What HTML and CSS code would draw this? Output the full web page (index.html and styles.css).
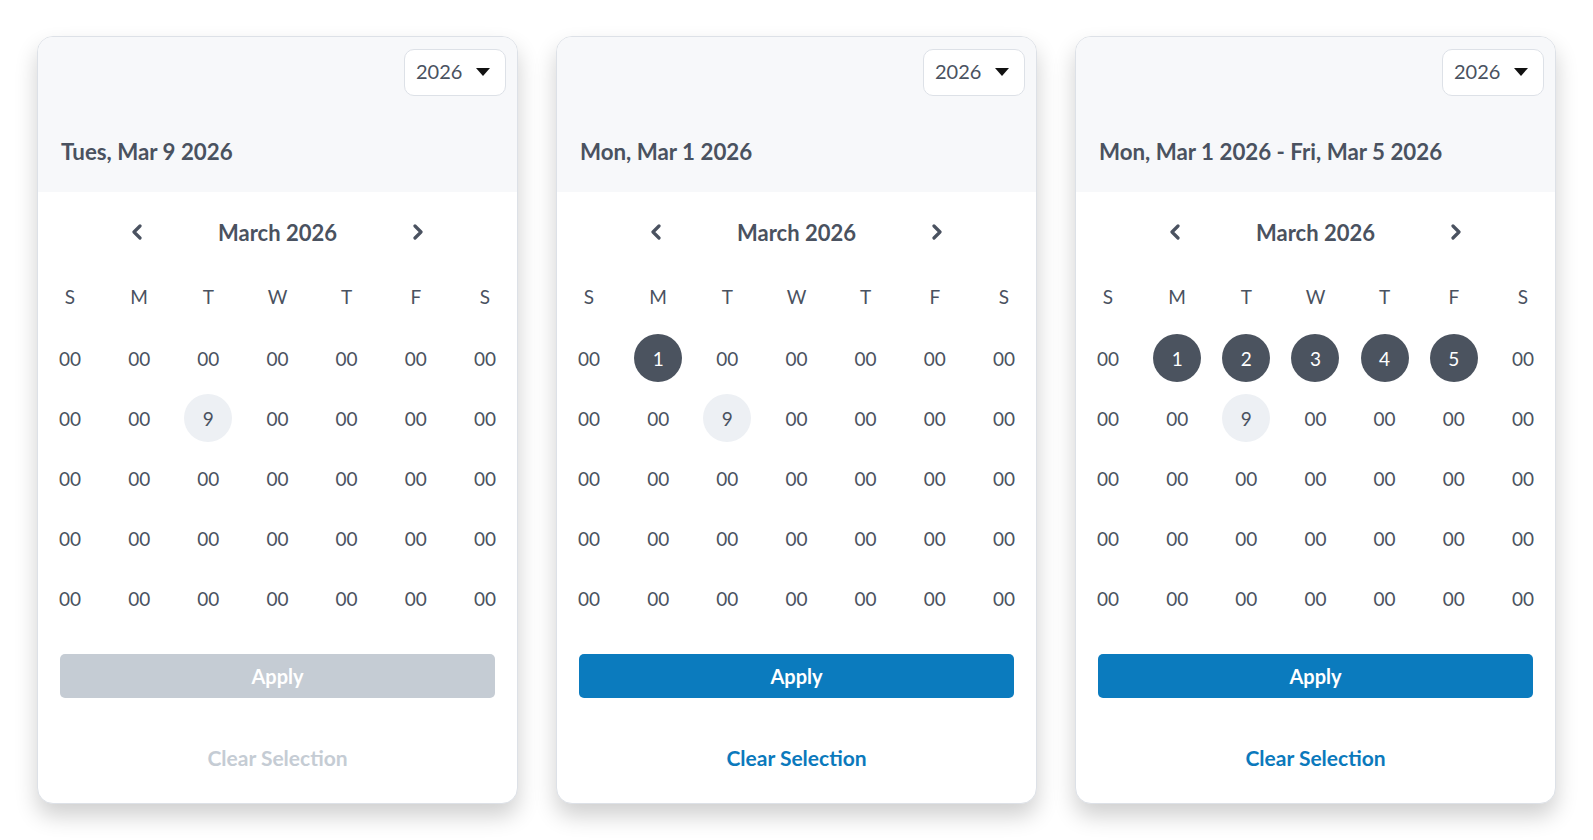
FILE: index.html
```html
<!DOCTYPE html>
<html lang="en">
<head>
    <meta charset="UTF-8">
    <meta name="viewport" content="width=device-width, initial-scale=1.0">
    <title>Date Picker States</title>
    <link rel="stylesheet" href="styles.css">
</head>
<body>
    <div class="pickers">

        <div class="picker disabled" data-selected="" data-today="9">
            <div class="picker-head">
                <button class="year-select">2026 <svg width="14" height="8" viewBox="0 0 14 8"><polygon points="0,0 14,0 7,8"/></svg></button>
                <div class="picked">Tues, Mar 9 2026</div>
            </div>
            <div class="picker-body">
                <div class="month-nav">
                    <button class="chev"><svg width="12" height="16" viewBox="0 0 12 16"><polyline points="9,2 3,8 9,14"/></svg></button>
                    <span class="month">March 2026</span>
                    <button class="chev"><svg width="12" height="16" viewBox="0 0 12 16"><polyline points="3,2 9,8 3,14"/></svg></button>
                </div>
                <div class="weekdays"></div>
                <div class="days"></div>
                <button class="apply">Apply</button>
                <a href="#" class="clear">Clear Selection</a>
            </div>
        </div>

        <div class="picker" data-selected="1" data-today="9">
            <div class="picker-head">
                <button class="year-select">2026 <svg width="14" height="8" viewBox="0 0 14 8"><polygon points="0,0 14,0 7,8"/></svg></button>
                <div class="picked">Mon, Mar 1 2026</div>
            </div>
            <div class="picker-body">
                <div class="month-nav">
                    <button class="chev"><svg width="12" height="16" viewBox="0 0 12 16"><polyline points="9,2 3,8 9,14"/></svg></button>
                    <span class="month">March 2026</span>
                    <button class="chev"><svg width="12" height="16" viewBox="0 0 12 16"><polyline points="3,2 9,8 3,14"/></svg></button>
                </div>
                <div class="weekdays"></div>
                <div class="days"></div>
                <button class="apply">Apply</button>
                <a href="#" class="clear">Clear Selection</a>
            </div>
        </div>

        <div class="picker" data-selected="1,2,3,4,5" data-today="9">
            <div class="picker-head">
                <button class="year-select">2026 <svg width="14" height="8" viewBox="0 0 14 8"><polygon points="0,0 14,0 7,8"/></svg></button>
                <div class="picked">Mon, Mar 1 2026 - Fri, Mar 5 2026</div>
            </div>
            <div class="picker-body">
                <div class="month-nav">
                    <button class="chev"><svg width="12" height="16" viewBox="0 0 12 16"><polyline points="9,2 3,8 9,14"/></svg></button>
                    <span class="month">March 2026</span>
                    <button class="chev"><svg width="12" height="16" viewBox="0 0 12 16"><polyline points="3,2 9,8 3,14"/></svg></button>
                </div>
                <div class="weekdays"></div>
                <div class="days"></div>
                <button class="apply">Apply</button>
                <a href="#" class="clear">Clear Selection</a>
            </div>
        </div>

    </div>

    <script>
        // placeholder grid: 5 weeks, "00" for every day except the marked ones
        const dayNames = ['S', 'M', 'T', 'W', 'T', 'F', 'S'];

        document.querySelectorAll('.picker').forEach(picker => {
            const selected = picker.dataset.selected ? picker.dataset.selected.split(',') : [];
            const today = picker.dataset.today;

            const weekdays = picker.querySelector('.weekdays');
            dayNames.forEach(d => {
                weekdays.innerHTML += `<span class="cell">${d}</span>`;
            });

            const days = picker.querySelector('.days');
            for (let i = 0; i < 35; i++) {
                // the 1st lands in the monday column
                const date = String(i);
                if (selected.includes(date)) {
                    days.innerHTML += `<span class="cell selected">${date}</span>`;
                } else if (date === today) {
                    days.innerHTML += `<span class="cell today">${date}</span>`;
                } else {
                    days.innerHTML += `<span class="cell">00</span>`;
                }
            }
        });
    </script>
</body>
</html>
```

FILE: styles.css
```css
* {
    box-sizing: border-box;
}
body {
    margin: 0;
    background: #fff;
    font-family: Lato, "Noto Sans", sans-serif;
    color: #4a5260;
}
button {
    font-family: inherit;
    border: none;
    background: none;
    padding: 0;
    cursor: pointer;
}
.pickers {
    display: flex;
    gap: 38px;
    padding: 36px 37px;
}
.picker {
    width: 481px;
    border: 1px solid #dde1e7;
    border-radius: 16px;
    overflow: hidden;
    background: #fff;
    box-shadow: 0 12px 22px rgba(0, 0, 0, 0.19);
}
.picker-head {
    background: #f7f8fa;
    height: 155px;
    padding: 12px 11px 0 23px;
    display: flex;
    flex-direction: column;
}
.year-select {
    align-self: flex-end;
    width: 102px;
    height: 47px;
    border: 1px solid #dde1e7;
    border-radius: 10px;
    background: #fff;
    color: #4a5260;
    font-size: 20px;
    display: flex;
    align-items: center;
    justify-content: space-between;
    padding: 0 15px 3px 11px;
}
.year-select svg {
    fill: #111;
    margin-top: 2px;
}
.picked {
    margin-top: 40px;
    font-size: 22.3px;
    font-weight: 700;
    line-height: 32px;
}
.picker-body {
    padding: 16px 8px 30px;
    display: flex;
    flex-direction: column;
}
.month-nav {
    width: 294px;
    height: 48px;
    margin: 0 auto 16px;
    display: flex;
    align-items: center;
    justify-content: space-between;
}
.chev {
    width: 12px;
    height: 16px;
    display: flex;
}
.chev svg {
    fill: none;
    stroke: #4a5260;
    stroke-width: 3.2;
    stroke-linecap: round;
    stroke-linejoin: round;
}
.month {
    font-size: 22px;
    font-weight: 700;
}
.weekdays,
.days {
    display: grid;
    grid-template-columns: repeat(7, 48px);
    justify-content: space-between;
    row-gap: 12px;
}
.weekdays {
    margin-bottom: 14px;
}
.cell {
    width: 48px;
    height: 48px;
    border-radius: 50%;
    display: flex;
    align-items: center;
    justify-content: center;
    font-size: 19px;
    color: #4a5260;
}
.cell.selected {
    background: #4b535f;
    color: #fff;
}
.cell.today {
    background: #edf0f4;
}
.apply {
    margin: 32px 14px 0;
    height: 44px;
    border-radius: 5px;
    background: #0b7bbe;
    color: #fff;
    font-size: 20px;
    font-weight: 700;
}
.clear {
    margin-top: 45px;
    text-align: center;
    line-height: 30px;
    font-size: 21px;
    font-weight: 700;
    color: #0b79bc;
    text-decoration: none;
}
.disabled .apply {
    background: #c5ccd4;
}
.disabled .clear {
    color: #c5ccd4;
}
```
